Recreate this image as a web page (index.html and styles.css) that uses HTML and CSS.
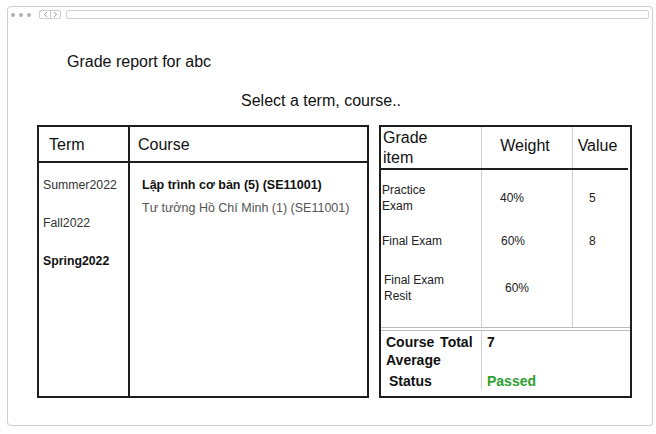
FILE: index.html
```html
<!DOCTYPE html>
<html lang="vi">
<head>
<meta charset="utf-8">
<title>Grade report</title>
<link rel="stylesheet" href="styles.css">
</head>
<body>
<div class="window">
  <div class="titlebar">
    <span class="dots"><i></i><i></i><i></i></span>
    <span class="nav">
      <svg width="19" height="7" viewBox="0 0 19 7"><path d="M6 1 L3.5 3.5 L6 6" fill="none" stroke="#999" stroke-width="1"/><path d="M9.5 0 V7" stroke="#ccc" stroke-width="1"/><path d="M13 1 L15.5 3.5 L13 6" fill="none" stroke="#999" stroke-width="1"/></svg>
    </span>
    <span class="url"></span>
  </div>
  <div class="page">
    <h1 class="title">Grade report for abc</h1>
    <p class="prompt">Select a term, course..</p>
    <div class="tables">
      <div class="picker">
        <div class="col col-term">
          <div class="head">Term</div>
          <ul class="terms">
            <li>Summer2022</li>
            <li>Fall2022</li>
            <li class="active">Spring2022</li>
          </ul>
        </div>
        <div class="col col-course">
          <div class="head">Course</div>
          <ul class="courses">
            <li class="active">Lập trình cơ bản (5) (SE11001)</li>
            <li>Tư tưởng Hồ Chí Minh (1) (SE11001)</li>
          </ul>
        </div>
      </div>
      <div class="grades">
        <div class="g-head">
          <div class="gh gh-item">Grade<br>item</div>
          <div class="gh gh-weight">Weight</div>
          <div class="gh gh-value">Value</div>
        </div>
        <div class="g-rule"></div>
        <div class="g-body">
          <div class="c c-item r1">Practice<br>Exam</div>
          <div class="c c-weight r1 w1">40%</div>
          <div class="c c-value r1">5</div>
          <div class="c c-item r2">Final Exam</div>
          <div class="c c-weight r2 w2">60%</div>
          <div class="c c-value r2">8</div>
          <div class="c c-item r3 i3">Final Exam<br>Resit</div>
          <div class="c c-weight r3 w3">60%</div>
          <div class="c c-value r3"></div>
        </div>
        <div class="g-foot">
          <div class="f-label">
            <div class="f-total">Course Total Average</div>
            <div class="f-status">Status</div>
          </div>
          <div class="f-value">
            <div class="f-avg">7</div>
            <div class="f-passed">Passed</div>
          </div>
        </div>
      </div>
    </div>
  </div>
</div>
</body>
</html>
```

FILE: styles.css
```css
* { box-sizing: border-box; }
html, body { margin: 0; padding: 0; background: #fff; }
body {
  font-family: "Liberation Sans", Arial, sans-serif;
  color: #222;
}
.window {
  margin: 6px 0 0 7px;
  width: 646px;
  height: 420px;
  border: 1px solid #cfcfcf;
  border-radius: 4px;
  box-shadow: 0 1px 0 #e2e2e2;
}
.titlebar {
  height: 15px;
  display: flex;
  align-items: center;
  padding: 0 3px 0 3px;
}
.dots { display: flex; gap: 4px; }
.dots i {
  display: block;
  width: 4px;
  height: 4px;
  border-radius: 50%;
  background: #b0b0b0;
}
.nav {
  margin-left: 8px;
  width: 22px;
  height: 9px;
  border: 1px solid #cfcfcf;
  border-radius: 2px;
  display: flex;
  align-items: center;
  justify-content: center;
}
.nav svg { display: block; }
.url {
  margin-left: 5px;
  flex: 1;
  height: 9px;
  border: 1px solid #d2d2d2;
  border-radius: 2px;
}
.page { padding: 31px 0 0 29px; }
.title {
  margin: 0 0 0 30px;
  font-size: 16px;
  line-height: 18px;
  font-weight: normal;
  color: #111;
}
.prompt {
  margin: 21px 0 0 204px;
  font-size: 16px;
  line-height: 18px;
  color: #111;
}
.tables {
  margin-top: 15px;
  display: flex;
  gap: 10px;
}
/* left picker */
.picker {
  width: 332px;
  height: 273px;
  border: 2px solid #1e1e1e;
  display: flex;
}
.col-term { width: 91px; border-right: 2px solid #1e1e1e; }
.col-course { flex: 1; }
.head {
  height: 36px;
  border-bottom: 2px solid #1e1e1e;
  font-size: 16px;
  line-height: 34px;
  padding-top: 1px;
  color: #111;
}
.col-term .head { padding-left: 10px; }
.col-course .head { padding-left: 8px; }
ul { list-style: none; margin: 0; padding: 0; }
.terms { padding: 15px 0 0 4px; }
.terms li {
  font-size: 12.3px;
  line-height: 14px;
  color: #333;
  margin-bottom: 24px;
}
.courses { padding: 15px 0 0 12px; }
.courses li {
  font-size: 12.5px;
  line-height: 14px;
  color: #555;
  margin-bottom: 9px;
}
.terms li.active, .courses li.active { font-weight: bold; color: #111; }
/* right grades */
.grades {
  width: 253px;
  height: 273px;
  border: 2px solid #1e1e1e;
  display: flex;
  flex-direction: column;
}
.g-head {
  height: 41px;
  display: grid;
  grid-template-columns: 101px 91px 57px;
}
.gh {
  font-size: 16px;
  line-height: 20px;
  color: #111;
  display: flex;
  align-items: center;
}
.gh-item { padding-left: 2px; border-right: 1px solid #cfcfcf; }
.gh-weight { justify-content: center; border-right: 1px solid #cfcfcf; padding-bottom: 4px; padding-right: 4px; }
.gh-value { justify-content: center; padding-right: 8px; padding-bottom: 4px; }
.g-rule {
  height: 2px;
  background: #1e1e1e;
  margin-right: 2px;
}
.g-body {
  height: 157px;
  display: grid;
  grid-template-columns: 101px 91px 57px;
  grid-template-rows: 56px 30px 71px;
}
.c {
  font-size: 12px;
  line-height: 16px;
  color: #222;
  display: flex;
  align-items: center;
}
.c-item { padding-left: 1px; border-right: 1px solid #cfcfcf; }
.c-weight { border-right: 1px solid #cfcfcf; }
.c-value { padding-left: 16px; }
.w1 { padding-left: 18px; }
.w2 { padding-left: 19px; }
.w3 { padding-left: 23px; }
.i3 { padding-left: 3px; }
.r3 { padding-bottom: 7px; }
.g-foot {
  flex: 1;
  border-top: 4px double #bdbdbd;
  display: flex;
  align-items: flex-start;
  font-size: 14px;
  line-height: 18px;
  font-weight: bold;
  color: #111;
}
.f-label {
  width: 101px;
  border-right: 1px solid #cfcfcf;
  padding: 2px 0 0 5px;
}
.f-total { word-spacing: 2px; }
.f-status { margin-top: 3px; padding-left: 3px; }
.f-value { padding: 2px 0 0 5px; }
.f-avg { height: 18px; }
.f-passed { margin-top: 21px; color: #2e9e2e; }
```
